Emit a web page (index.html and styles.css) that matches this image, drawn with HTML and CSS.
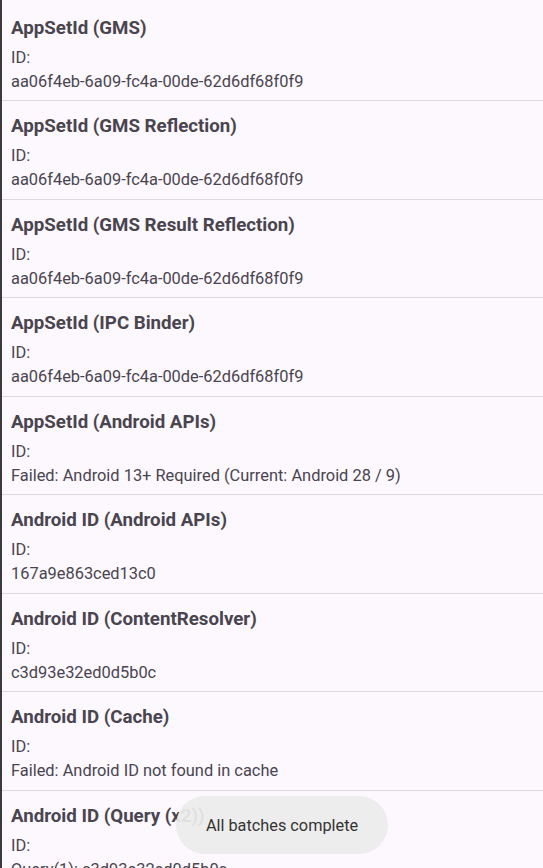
FILE: index.html
```html
<!DOCTYPE html>
<html lang="en">
<head>
<meta charset="utf-8">
<title>Identifiers</title>
<link rel="stylesheet" href="styles.css">
</head>
<body>
<main class="screen">
  <ul class="id-list">
    <li class="id-item">
      <h2 class="id-title">AppSetId (GMS)</h2>
      <p class="id-label">ID:</p>
      <p class="id-value">aa06f4eb-6a09-fc4a-00de-62d6df68f0f9</p>
    </li>
    <li class="id-item">
      <h2 class="id-title">AppSetId (GMS Reflection)</h2>
      <p class="id-label">ID:</p>
      <p class="id-value">aa06f4eb-6a09-fc4a-00de-62d6df68f0f9</p>
    </li>
    <li class="id-item">
      <h2 class="id-title">AppSetId (GMS Result Reflection)</h2>
      <p class="id-label">ID:</p>
      <p class="id-value">aa06f4eb-6a09-fc4a-00de-62d6df68f0f9</p>
    </li>
    <li class="id-item">
      <h2 class="id-title">AppSetId (IPC Binder)</h2>
      <p class="id-label">ID:</p>
      <p class="id-value">aa06f4eb-6a09-fc4a-00de-62d6df68f0f9</p>
    </li>
    <li class="id-item">
      <h2 class="id-title">AppSetId (Android APIs)</h2>
      <p class="id-label">ID:</p>
      <p class="id-value">Failed: Android 13+ Required (Current: Android 28 / 9)</p>
    </li>
    <li class="id-item">
      <h2 class="id-title">Android ID (Android APIs)</h2>
      <p class="id-label">ID:</p>
      <p class="id-value">167a9e863ced13c0</p>
    </li>
    <li class="id-item">
      <h2 class="id-title">Android ID (ContentResolver)</h2>
      <p class="id-label">ID:</p>
      <p class="id-value">c3d93e32ed0d5b0c</p>
    </li>
    <li class="id-item">
      <h2 class="id-title">Android ID (Cache)</h2>
      <p class="id-label">ID:</p>
      <p class="id-value">Failed: Android ID not found in cache</p>
    </li>
    <li class="id-item">
      <h2 class="id-title">Android ID (Query (x2))</h2>
      <p class="id-label">ID:</p>
      <p class="id-value">Query(1): c3d93e32ed0d5b0c</p>
    </li>
  </ul>
  <div class="toast">All batches complete</div>
</main>
</body>
</html>
```
FILE: styles.css
```css
html, body {
  margin: 0;
  padding: 0;
  height: 100%;
  overflow: hidden;
}

body {
  background: #fdf7fe;
  font-family: Roboto, "Noto Sans", sans-serif;
}

.screen {
  position: relative;
  height: 100%;
  border-left: 2px solid #3b3a3d;
  box-sizing: border-box;
  overflow: hidden;
}

.id-list {
  list-style: none;
  margin: 0;
  padding: 2.5px 0 0;
}

.id-item {
  display: flex;
  flex-direction: column;
  padding: 13px 9px 0;
  height: 98.55px;
  box-sizing: border-box;
  border-bottom: 1.5px solid #dcd8de;
}

.id-title {
  margin: 0 0 6px;
  font-size: 18.7px;
  line-height: 24px;
  font-weight: 700;
  color: #49454e;
}

.id-label,
.id-value {
  margin: 0;
  font-size: 16.4px;
  line-height: 24px;
  color: #49454e;
}

.toast {
  position: absolute;
  left: 174px;
  top: 796px;
  width: 212px;
  height: 58px;
  box-sizing: border-box;
  display: flex;
  align-items: center;
  justify-content: center;
  border-radius: 29px;
  background: rgba(236, 236, 236, 0.93);
  color: #333333;
  font-size: 16.3px;
}
```
